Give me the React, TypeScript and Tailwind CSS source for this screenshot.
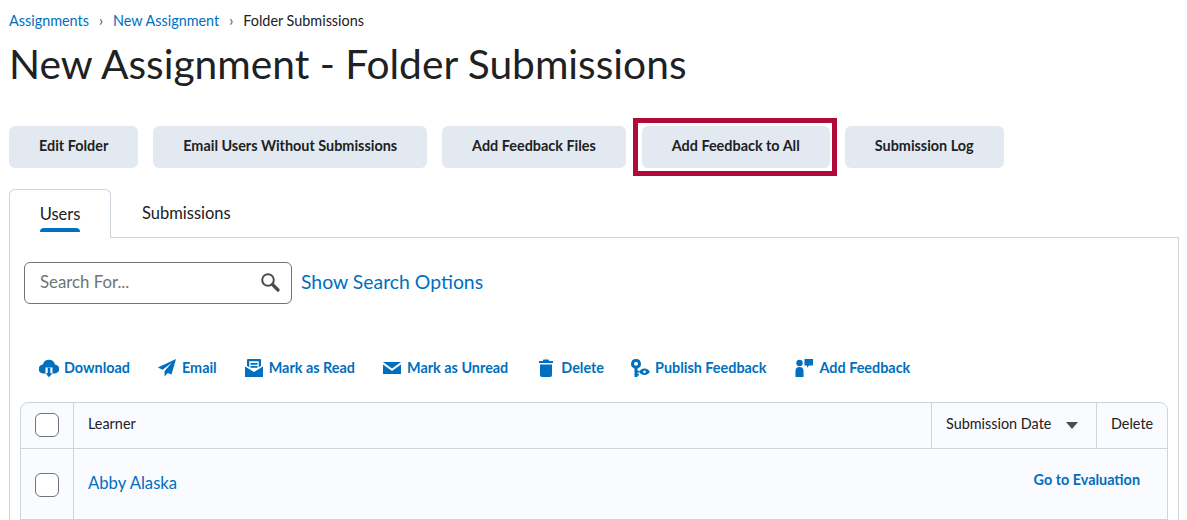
import type { ReactNode } from 'react';

const buttons = ['Edit Folder', 'Email Users Without Submissions', 'Add Feedback Files', 'Add Feedback to All', 'Submission Log'];

function Icon({ children, className }: { children: ReactNode; className: string }) {
  return (
    <svg viewBox="0 0 20 20" className={className} fill="#006fbf">
      {children}
    </svg>
  );
}

const actions: { label: string; gap: string; icon: ReactNode }[] = [
  {
    label: 'Download',
    gap: 'w-[27px]',
    icon: (
      <>
        <path d="M4.500 15.500a4.500 4.500 0 0 1-.6-9A6.200 6.200 0 0 1 16 6.500a4.500 4.500 0 0 1-.5 9h-2V9.500h-7v6z" />
        <path d="M8.700 9.800h2.600v5.400h2.200L10 19.200l-3.500-4h2.200z" />
      </>
    ),
  },
  {
    label: 'Email',
    gap: 'w-[27px]',
    icon: <path d="M19 1 .8 9.500l4.800 2.200L15 4.500 7.600 13v5.500l3.200-3.600 3.700 1.700z" />,
  },
  {
    label: 'Mark as Read',
    gap: 'w-[27px]',
    icon: (
      <>
        <path d="M4 1h12a1 1 0 0 1 1 1v6l-2.200 1.300V3.200H5.200v6.100L3 8V2a1 1 0 0 1 1-1z" />
        <path d="M6.500 5h7v1.800h-7zM6.500 8h7v1.800h-7z" />
        <path d="M1 8.500 10 14l9-5.500V19H1z" />
      </>
    ),
  },
  {
    label: 'Mark as Unread',
    gap: 'w-[28px]',
    icon: (
      <>
        <path d="M1 4h18L10 10.500z" />
        <path d="M1 6.500 10 13l9-6.500V16H1z" />
      </>
    ),
  },
  {
    label: 'Delete',
    gap: 'w-[26px]',
    icon: (
      <>
        <path d="M7.500 1.500h5l.7 1.500H17v2H3V3h3.800z" />
        <path d="M4 6.500h12V17a2 2 0 0 1-2 2H6a2 2 0 0 1-2-2z" />
      </>
    ),
  },
  {
    label: 'Publish Feedback',
    gap: 'w-[28px]',
    icon: (
      <>
        <path fillRule="evenodd" d="M6 1a4.800 4.800 0 0 1 1.500 9.400v2.400h2v1.800h-2v1.100h1.500v1.700H7.500V19H4.500v-8.600A4.800 4.800 0 0 1 6 1zm0 2.800a2 2 0 1 0 0 4 2 2 0 0 0 0-4z" />
        <path fillRule="evenodd" d="M14.500 10.500c2.400 0 4.500 1.500 5.300 3.300-.8 1.900-2.900 3.300-5.300 3.300s-4.500-1.400-5.300-3.300c.8-1.800 2.900-3.300 5.300-3.300zm0 1.900a1.400 1.400 0 1 0 0 2.800 1.400 1.400 0 0 0 0-2.800z" />
      </>
    ),
  },
  {
    label: 'Add Feedback',
    gap: 'w-0',
    icon: (
      <>
        <circle cx="5.500" cy="5" r="3.200" />
        <path d="M1.500 13a4 4 0 0 1 8 0v6h-8z" />
        <path d="M10.500 1h8.500v6.500h-4l-2 2.200V7.500h-2.500z" />
      </>
    ),
  },
];

export default function App() {
  return (
    <div className="h-[520px] overflow-hidden bg-white pl-[9px] pr-2 pt-[13px] font-['Lato','Open_Sans',sans-serif] text-[#202122]">
      <nav className="flex h-[16px] items-center text-[14.4px] leading-[16px]">
        <a className="text-[#006fbf]">Assignments</a>
        <span className="mx-[10px] text-[#494c4e]">›</span>
        <a className="text-[#006fbf]">New Assignment</a>
        <span className="mx-[10px] text-[#494c4e]">›</span>
        <span>Folder Submissions</span>
      </nav>

      <h1 className="mt-[10px] text-[40.7px] leading-[50px] font-normal">New Assignment - Folder Submissions</h1>

      <div className="mt-[37px] flex">
        {buttons.map((label, i) => (
          <button
            key={label}
            className={`relative h-[42px] rounded-[6px] bg-[#e3e9f1] px-[30px] pb-[3px] text-[14.4px] font-bold ${i === 0 ? '' : i === 3 ? 'ml-[16px]' : i === 4 ? 'ml-[15px]' : 'ml-[15px]'}`}
          >
            {label}
            {i === 3 && <span className="absolute -left-[9px] -right-[7px] -inset-y-[8px] border-[5.5px] border-[#b00a3a]" />}
          </button>
        ))}
      </div>

      <div className="mt-[21px] flex h-[49px]">
        <div className="relative z-10 h-[49px] w-[102px] rounded-t-[6px] border border-b-0 border-[#cdd5dc] bg-white text-center">
          <div className="pt-[14px] text-[16.5px] leading-[20px]">Users</div>
          <div className="mx-auto mt-[4px] h-[4px] w-[40px] rounded-t-[4px] bg-[#006fbf]" />
        </div>
        <div className="ml-[31px] pt-[14px] text-[16.5px] leading-[20px]">Submissions</div>
      </div>

      <div className="-mt-px h-[300px] border border-b-0 border-[#cdd5dc] pl-[14px] pr-[10px] pt-[24px]">
        <div className="flex items-center">
          <div className="flex h-[42px] w-[268px] items-center justify-between rounded-[6px] border border-[#6e7477] pb-[2px] pl-[15px] pr-[11px]">
            <span className="text-[16.8px] text-[#6e7477]">Search For...</span>
            <svg viewBox="0 0 20 20" className="h-[20px] w-[20px]" fill="none" stroke="#494c4e">
              <circle cx="8" cy="8" r="5.800" strokeWidth="2" />
              <path d="M12.500 12.500 18 18" strokeWidth="3.200" strokeLinecap="round" />
            </svg>
          </div>
          <a className="ml-[9px] pb-[2px] text-[19.4px] text-[#006fbf]">Show Search Options</a>
        </div>

        <div className="mt-[53px] flex h-[22px] items-center pl-[15px] text-[14.4px] font-bold text-[#006fbf]">
          {actions.map(a => (
            <div key={a.label} className="flex items-center">
              <Icon className="mr-[5px] h-[20px] w-[20px]">{a.icon}</Icon>
              <span>{a.label}</span>
              <span className={a.gap} />
            </div>
          ))}
        </div>

        <div className="-ml-[4px] mt-[23px] w-[1148px] rounded-t-[8px] border border-[#cdd5dc] bg-[#f9fbff]">
          <div className="flex h-[46px] items-center border-b border-[#cdd5dc] text-[14.4px]">
            <div className="flex h-full w-[53px] items-center justify-center border-r border-[#cdd5dc] pb-[2px]">
              <span className="h-[24px] w-[24px] rounded-[6px] border border-[#6e7477] bg-white" />
            </div>
            <div className="flex-1 pb-[3px] pl-[14px]">Learner</div>
            <div className="flex h-full w-[165px] items-center border-l border-[#cdd5dc] pb-[3px] pl-[14px]">
              Submission Date
              <svg viewBox="0 0 12 7" className="ml-[15px] mt-[3px] h-[7px] w-[12px]" fill="#494c4e">
                <path d="M0 0h12L6 7z" />
              </svg>
            </div>
            <div className="flex h-full w-[71px] items-center border-l border-[#cdd5dc] pb-[3px] pl-[14px]">Delete</div>
          </div>
          <div className="flex h-[71px] border-b border-[#cdd5dc]">
            <div className="flex h-full w-[53px] items-start justify-center border-r border-[#cdd5dc] pt-[24px]">
              <span className="h-[24px] w-[24px] rounded-[6px] border border-[#6e7477] bg-white" />
            </div>
            <a className="flex-1 pl-[14px] pt-[23px] text-[16.7px] leading-[22px] text-[#006fbf]">Abby Alaska</a>
            <a className="pr-[27px] pt-[22px] text-[14.4px] leading-[18px] font-bold text-[#006fbf]">Go to Evaluation</a>
          </div>
        </div>
      </div>
    </div>
  );
}
